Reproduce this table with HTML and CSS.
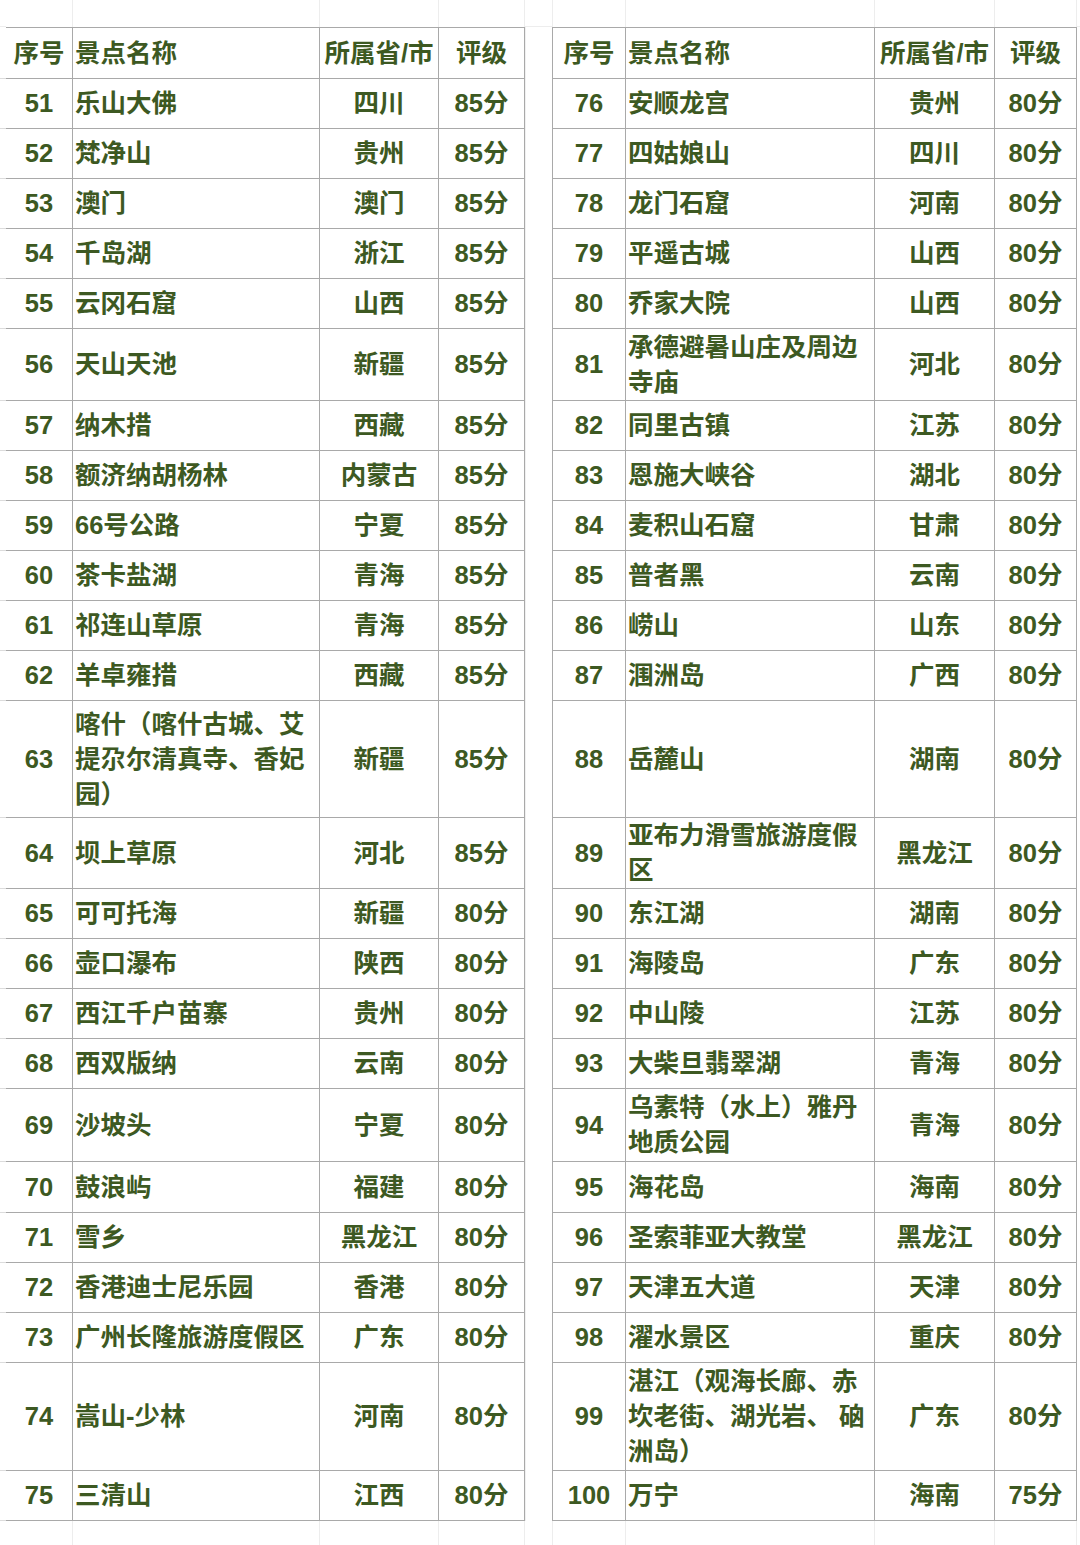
FILE: index.html
```html
<!DOCTYPE html>
<html lang="zh-CN">
<head>
<meta charset="utf-8">
<title>景点评级表</title>
<link rel="stylesheet" href="styles.css">
</head>
<body>
<table class="sheet">
  <colgroup>
    <col class="w-edge"><col class="w-no-l"><col class="w-name-l"><col class="w-prov-l"><col class="w-score-l">
    <col class="w-gap">
    <col class="w-no-r"><col class="w-name-r"><col class="w-prov-r"><col class="w-score-r"><col class="w-end">
  </colgroup>
  <tbody>
    <tr class="top"><td></td><td></td><td></td><td></td><td></td><td></td><td></td><td></td><td></td><td></td><td></td></tr>
    <tr class="head"><td></td><td class="no">序号</td><td class="name">景点名称</td><td class="prov">所属省/市</td><td class="score">评级</td><td></td><td class="no">序号</td><td class="name">景点名称</td><td class="prov">所属省/市</td><td class="score">评级</td><td></td></tr>
    <tr class="row"><td></td><td class="no">51</td><td class="name">乐山大佛</td><td class="prov">四川</td><td class="score">85分</td><td></td><td class="no">76</td><td class="name">安顺龙宫</td><td class="prov">贵州</td><td class="score">80分</td><td></td></tr>
    <tr class="row"><td></td><td class="no">52</td><td class="name">梵净山</td><td class="prov">贵州</td><td class="score">85分</td><td></td><td class="no">77</td><td class="name">四姑娘山</td><td class="prov">四川</td><td class="score">80分</td><td></td></tr>
    <tr class="row"><td></td><td class="no">53</td><td class="name">澳门</td><td class="prov">澳门</td><td class="score">85分</td><td></td><td class="no">78</td><td class="name">龙门石窟</td><td class="prov">河南</td><td class="score">80分</td><td></td></tr>
    <tr class="row"><td></td><td class="no">54</td><td class="name">千岛湖</td><td class="prov">浙江</td><td class="score">85分</td><td></td><td class="no">79</td><td class="name">平遥古城</td><td class="prov">山西</td><td class="score">80分</td><td></td></tr>
    <tr class="row"><td></td><td class="no">55</td><td class="name">云冈石窟</td><td class="prov">山西</td><td class="score">85分</td><td></td><td class="no">80</td><td class="name">乔家大院</td><td class="prov">山西</td><td class="score">80分</td><td></td></tr>
    <tr class="row h72"><td></td><td class="no">56</td><td class="name">天山天池</td><td class="prov">新疆</td><td class="score">85分</td><td></td><td class="no">81</td><td class="name">承德避暑山庄及周边寺庙</td><td class="prov">河北</td><td class="score">80分</td><td></td></tr>
    <tr class="row"><td></td><td class="no">57</td><td class="name">纳木措</td><td class="prov">西藏</td><td class="score">85分</td><td></td><td class="no">82</td><td class="name">同里古镇</td><td class="prov">江苏</td><td class="score">80分</td><td></td></tr>
    <tr class="row"><td></td><td class="no">58</td><td class="name">额济纳胡杨林</td><td class="prov">内蒙古</td><td class="score">85分</td><td></td><td class="no">83</td><td class="name">恩施大峡谷</td><td class="prov">湖北</td><td class="score">80分</td><td></td></tr>
    <tr class="row"><td></td><td class="no">59</td><td class="name">66号公路</td><td class="prov">宁夏</td><td class="score">85分</td><td></td><td class="no">84</td><td class="name">麦积山石窟</td><td class="prov">甘肃</td><td class="score">80分</td><td></td></tr>
    <tr class="row"><td></td><td class="no">60</td><td class="name">茶卡盐湖</td><td class="prov">青海</td><td class="score">85分</td><td></td><td class="no">85</td><td class="name">普者黑</td><td class="prov">云南</td><td class="score">80分</td><td></td></tr>
    <tr class="row"><td></td><td class="no">61</td><td class="name">祁连山草原</td><td class="prov">青海</td><td class="score">85分</td><td></td><td class="no">86</td><td class="name">崂山</td><td class="prov">山东</td><td class="score">80分</td><td></td></tr>
    <tr class="row"><td></td><td class="no">62</td><td class="name">羊卓雍措</td><td class="prov">西藏</td><td class="score">85分</td><td></td><td class="no">87</td><td class="name">涠洲岛</td><td class="prov">广西</td><td class="score">80分</td><td></td></tr>
    <tr class="row h117"><td></td><td class="no">63</td><td class="name">喀什（喀什古城、艾提尕尔清真寺、香妃园）</td><td class="prov">新疆</td><td class="score">85分</td><td></td><td class="no">88</td><td class="name">岳麓山</td><td class="prov">湖南</td><td class="score">80分</td><td></td></tr>
    <tr class="row h71"><td></td><td class="no">64</td><td class="name">坝上草原</td><td class="prov">河北</td><td class="score">85分</td><td></td><td class="no">89</td><td class="name">亚布力滑雪旅游度假区</td><td class="prov">黑龙江</td><td class="score">80分</td><td></td></tr>
    <tr class="row"><td></td><td class="no">65</td><td class="name">可可托海</td><td class="prov">新疆</td><td class="score">80分</td><td></td><td class="no">90</td><td class="name">东江湖</td><td class="prov">湖南</td><td class="score">80分</td><td></td></tr>
    <tr class="row"><td></td><td class="no">66</td><td class="name">壶口瀑布</td><td class="prov">陕西</td><td class="score">80分</td><td></td><td class="no">91</td><td class="name">海陵岛</td><td class="prov">广东</td><td class="score">80分</td><td></td></tr>
    <tr class="row"><td></td><td class="no">67</td><td class="name">西江千户苗寨</td><td class="prov">贵州</td><td class="score">80分</td><td></td><td class="no">92</td><td class="name">中山陵</td><td class="prov">江苏</td><td class="score">80分</td><td></td></tr>
    <tr class="row"><td></td><td class="no">68</td><td class="name">西双版纳</td><td class="prov">云南</td><td class="score">80分</td><td></td><td class="no">93</td><td class="name">大柴旦翡翠湖</td><td class="prov">青海</td><td class="score">80分</td><td></td></tr>
    <tr class="row h73"><td></td><td class="no">69</td><td class="name">沙坡头</td><td class="prov">宁夏</td><td class="score">80分</td><td></td><td class="no">94</td><td class="name">乌素特（水上）雅丹地质公园</td><td class="prov">青海</td><td class="score">80分</td><td></td></tr>
    <tr class="row h51"><td></td><td class="no">70</td><td class="name">鼓浪屿</td><td class="prov">福建</td><td class="score">80分</td><td></td><td class="no">95</td><td class="name">海花岛</td><td class="prov">海南</td><td class="score">80分</td><td></td></tr>
    <tr class="row"><td></td><td class="no">71</td><td class="name">雪乡</td><td class="prov">黑龙江</td><td class="score">80分</td><td></td><td class="no">96</td><td class="name">圣索菲亚大教堂</td><td class="prov">黑龙江</td><td class="score">80分</td><td></td></tr>
    <tr class="row"><td></td><td class="no">72</td><td class="name">香港迪士尼乐园</td><td class="prov">香港</td><td class="score">80分</td><td></td><td class="no">97</td><td class="name">天津五大道</td><td class="prov">天津</td><td class="score">80分</td><td></td></tr>
    <tr class="row"><td></td><td class="no">73</td><td class="name">广州长隆旅游度假区</td><td class="prov">广东</td><td class="score">80分</td><td></td><td class="no">98</td><td class="name">濯水景区</td><td class="prov">重庆</td><td class="score">80分</td><td></td></tr>
    <tr class="row h108"><td></td><td class="no">74</td><td class="name">嵩山-少林</td><td class="prov">河南</td><td class="score">80分</td><td></td><td class="no">99</td><td class="name">湛江（观海长廊、赤坎老街、湖光岩、 硇洲岛）</td><td class="prov">广东</td><td class="score">80分</td><td></td></tr>
    <tr class="row"><td></td><td class="no">75</td><td class="name">三清山</td><td class="prov">江西</td><td class="score">80分</td><td></td><td class="no">100</td><td class="name">万宁</td><td class="prov">海南</td><td class="score">75分</td><td></td></tr>
    <tr class="bottom"><td></td><td></td><td></td><td></td><td></td><td></td><td></td><td></td><td></td><td></td><td></td></tr>
  </tbody>
</table>
</body>
</html>
```

FILE: styles.css
```css
html, body {
  margin: 0;
  padding: 0;
  background: #ffffff;
}

.sheet {
  width: 1080px;
  table-layout: fixed;
  border-collapse: separate;
  border-spacing: 0;
  font-family: "Liberation Sans", "Noto Sans CJK SC", sans-serif;
  font-weight: 700;
  color: #3d5922;
}

.w-edge { width: 6px; }
.w-no-l { width: 67px; }
.w-name-l { width: 247px; }
.w-prov-l { width: 119px; }
.w-score-l { width: 86px; }
.w-gap { width: 28px; }
.w-no-r { width: 73px; }
.w-name-r { width: 249px; }
.w-prov-r { width: 120px; }
.w-score-r { width: 82px; }
.w-end { width: 3px; }

.sheet td {
  box-sizing: border-box;
  padding: 0;
  vertical-align: middle;
  font-size: 25.5px;
  line-height: 35px;
  overflow: hidden;
}

/* spreadsheet background grid */
.top td { height: 27px; }
.bottom td { height: 24px; }
.top td:nth-child(n+2):nth-child(-n+10),
.bottom td:nth-child(n+2):nth-child(-n+10) {
  border-right: 1px solid #ededed;
}
.top td:nth-child(1),
.top td:nth-child(6),
.top td:nth-child(11) {
  border-bottom: 1px solid #ededed;
}

/* table cells */
.head td { height: 52px; }
.row td { height: 50px; }
.row.h51 td { height: 51px; }
.row.h71 td { height: 71px; }
.row.h72 td { height: 72px; }
.row.h73 td { height: 73px; }
.row.h108 td { height: 108px; }
.row.h117 td { height: 117px; }

.head td:nth-child(n+2):nth-child(-n+5),
.head td:nth-child(n+7):nth-child(-n+10) {
  border-top: 1px solid #a9a9a9;
}

.head td:nth-child(n+2):nth-child(-n+5),
.head td:nth-child(n+7):nth-child(-n+10),
.row td:nth-child(n+2):nth-child(-n+5),
.row td:nth-child(n+7):nth-child(-n+10) {
  border-right: 1px solid #a9a9a9;
  border-bottom: 1px solid #a9a9a9;
}

.head td:nth-child(1),
.row td:nth-child(1) {
  border-bottom: 1px solid #dcdcdc;
}

.head td:nth-child(6),
.row td:nth-child(6) {
  border-left: 1px solid #f0f0f0;
  border-right: 1px solid #a9a9a9;
}

.no {
  text-align: center;
  font-size: 23.5px;
}
.head .no { font-size: 25.5px; }

.name {
  text-align: left;
  padding-left: 2px !important;
  padding-right: 1px !important;
}

.prov {
  text-align: center;
  white-space: nowrap;
}

.score {
  text-align: center;
  font-size: 24.5px;
  white-space: nowrap;
}
.head .score { font-size: 25.5px; }
```
